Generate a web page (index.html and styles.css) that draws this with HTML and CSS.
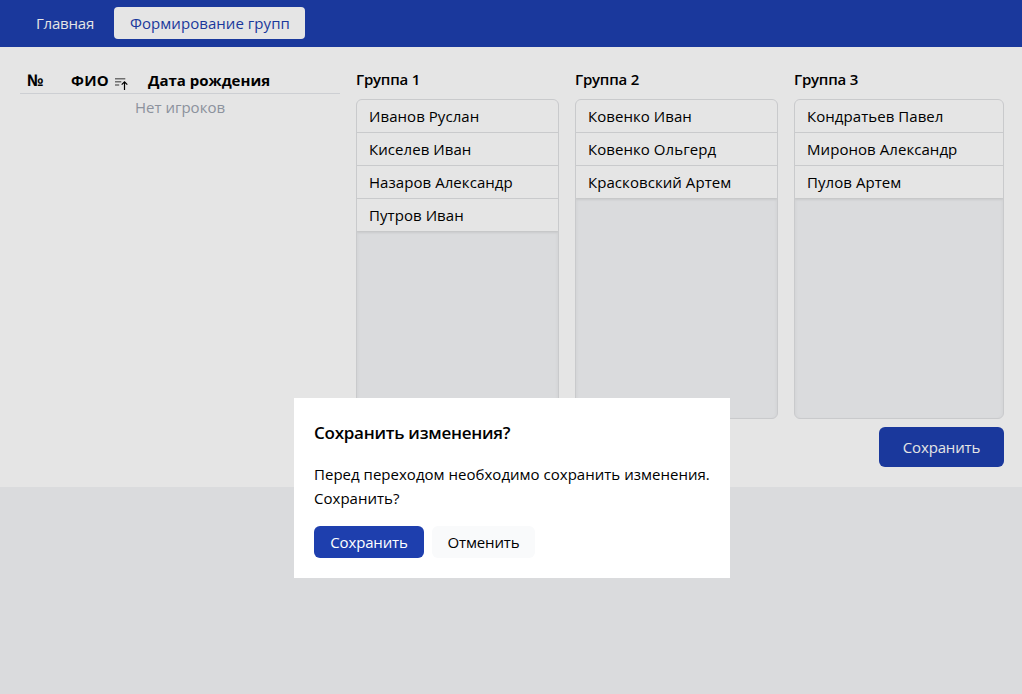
FILE: index.html
```html
<!DOCTYPE html>
<html lang="ru">
<head>
<meta charset="utf-8">
<title>Формирование групп</title>
<link rel="stylesheet" href="styles.css">
</head>
<body>
<nav class="nav">
  <a class="nav-link"><span class="nav-home">Главная</span></a>
  <a class="nav-link nav-link-active"><span>Формирование групп</span></a>
</nav>
<main class="content">
  <section class="players">
    <div class="players-head">
      <span class="col-num">№</span>
      <span class="col-name">ФИО</span>
      <svg class="sort-icon" width="14" height="14" viewBox="0 0 14 14" fill="none">
        <path d="M0 1.7h10.3M0 4.7h6.3M0 7.9h4.2" stroke="#7c7c7c" stroke-width="1.5"/>
        <path d="M9.5 13V4.9M6.7 7.7l2.8-2.8 2.8 2.8" stroke="#000" stroke-width="1.2"/>
      </svg>
      <span class="col-date">Дата рождения</span>
    </div>
    <p class="players-empty">Нет игроков</p>
  </section>
  <div class="groups-area">
    <div class="groups">
      <section class="group">
        <h2 class="group-title">Группа 1</h2>
        <div class="group-box"><ul class="group-list"><li>Иванов Руслан</li><li>Киселев Иван</li><li>Назаров Александр</li><li>Путров Иван</li></ul></div>
      </section>
      <section class="group">
        <h2 class="group-title">Группа 2</h2>
        <div class="group-box"><ul class="group-list"><li>Ковенко Иван</li><li>Ковенко Ольгерд</li><li>Красковский Артем</li></ul></div>
      </section>
      <section class="group">
        <h2 class="group-title">Группа 3</h2>
        <div class="group-box"><ul class="group-list"><li>Кондратьев Павел</li><li>Миронов Александр</li><li>Пулов Артем</li></ul></div>
      </section>
    </div>
    <button class="save">Сохранить</button>
  </div>
</main>
<div class="overlay">
  <div class="dialog">
    <h3 class="dialog-title">Сохранить изменения?</h3>
    <p class="dialog-text">Перед переходом необходимо сохранить изменения. Сохранить?</p>
    <div class="dialog-actions">
      <button class="btn btn-primary">Сохранить</button>
      <button class="btn btn-plain">Отменить</button>
    </div>
  </div>
</div>
</body>
</html>
```
FILE: styles.css
```css
* { box-sizing: border-box; margin: 0; padding: 0; }
body {
  background: #f3f4f6;
  color: #000;
  font: 15px/24px "Open Sans", "Noto Sans", sans-serif;
  height: 694px;
  overflow: hidden;
}
button { font: inherit; border: 0; letter-spacing: -.15px; }
.nav { display: flex; gap: 4px; height: 47px; padding: 7px 20px; background: #1e3fae; }
.nav-link { height: 32px; padding: 4px 16px; border-radius: 4px; color: #fff; white-space: nowrap; }
.nav-link:first-child { width: 90px; letter-spacing: -.2px; }
.nav-link-active { width: 191px; background: #fff; color: #1e3fae; letter-spacing: .05px; }
.content { display: flex; gap: 16px; height: 440px; padding: 20px 18px 20px 20px; background: #fff; }
.players { width: 320px; }
.players-head {
  display: flex;
  height: 27px;
  padding: 1px 0 0 7px;
  border-bottom: 1px solid #e5e7eb;
  font-weight: 700;
}
.col-num { width: 44px; font-family: "Noto Sans", sans-serif; font-size: 16px; }
.col-name { width: 44px; letter-spacing: .3px; }
.sort-icon { margin-top: 9px; }
.col-date { margin-left: 19px; white-space: nowrap; }
.players-empty { margin-top: 1px; text-align: center; color: #9ca3af; }
.groups-area { display: flex; flex-direction: column; align-items: flex-end; gap: 8px; width: 648px; }
.groups { display: grid; grid-template-columns: 203px 203px 210px; gap: 16px; }
.group-title { height: 32px; font-size: 15px; line-height: 25px; font-weight: 600; letter-spacing: -.2px; }
.group-box {
  height: 320px;
  border: 1px solid #e0e1e4;
  border-radius: 6px;
  background: #f3f4f6;
  box-shadow: inset 0 2px 4px rgba(0, 0, 0, .05);
  overflow: hidden;
}
.group-list { list-style: none; background: #fff; box-shadow: 0 1px 3px rgba(0, 0, 0, .14); }
.group-list li { height: 33px; padding: 4px 12px; border-bottom: 1px solid #e0e1e4; letter-spacing: .06px; white-space: nowrap; }
.group-list li:last-child { height: 32px; border-bottom: 0; }
.save { width: 125px; height: 40px; border-radius: 6px; background: #1e3fae; color: #fff; }
.overlay { position: fixed; inset: 0; background: rgba(0, 0, 0, .1); }
.dialog { position: absolute; left: 294px; top: 398px; width: 436px; height: 180px; padding: 20px; background: #fff; }
.dialog-title { font-size: 17px; line-height: 29px; font-weight: 600; letter-spacing: -.25px; }
.dialog-text { margin: 15px -10px 16px 0; padding-right: 10px; letter-spacing: .02px; }
.dialog-actions { display: flex; gap: 8px; }
.btn { height: 32px; border-radius: 6px; }
.btn-primary { width: 110px; background: #1e3fae; color: #fff; }
.btn-plain { width: 103px; background: #f9fafb; color: #000; }
```
